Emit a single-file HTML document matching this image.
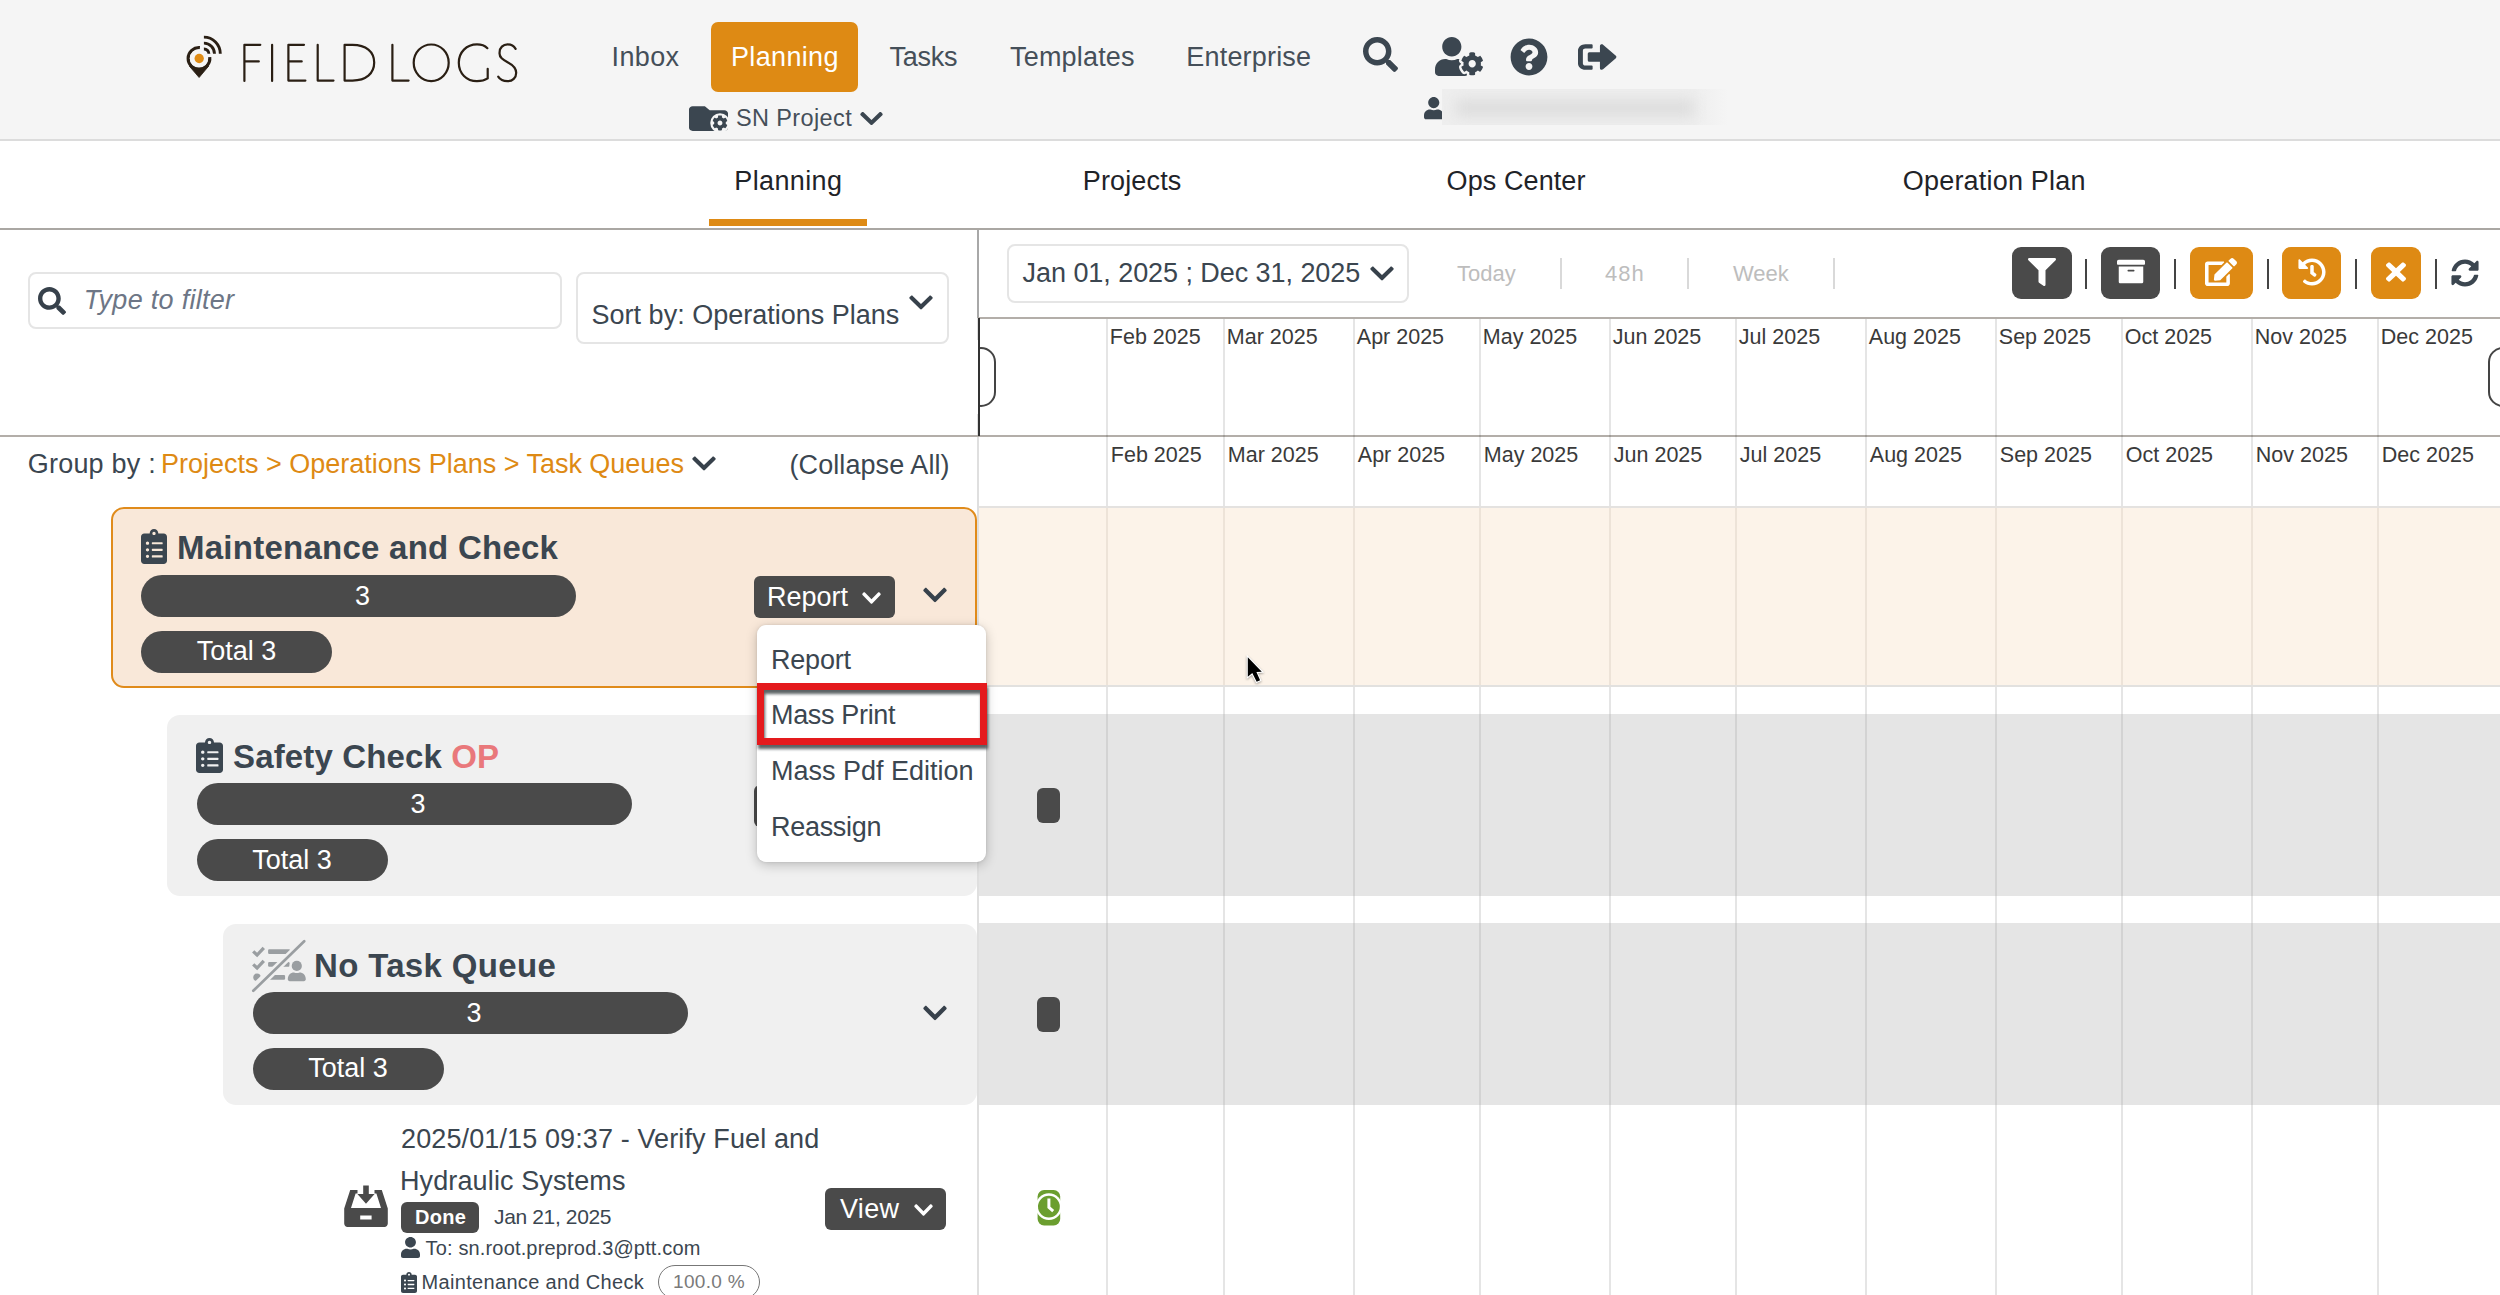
<!DOCTYPE html>
<html lang="en"><head><meta charset="utf-8"><title>FieldLogs - Planning</title>
<style>
html,body{margin:0;padding:0;background:#fff;}
html{overflow:hidden;width:2500px;height:1295px;}
body{width:2500px;height:1295px;position:relative;overflow:hidden;font-family:"Liberation Sans",sans-serif;}
.b{position:absolute;box-sizing:border-box;}
.ic{position:absolute;display:block;overflow:visible;}
.t{position:absolute;white-space:nowrap;line-height:1;display:block;}
</style></head>
<body>
<div class="b" style="left:0px;top:0px;width:2500px;height:140px;background:#f5f5f5;border-radius:0px;"></div>
<div class="b" style="left:0px;top:139px;width:2500px;height:2px;background:#dcdcdc;border-radius:0px;"></div>
<svg class="ic" style="left:170px;top:20px;width:370px;height:80px" viewBox="170 20 370 80">
<g fill="none" stroke="#2a1f14" stroke-width="2.2" stroke-linecap="round" stroke-linejoin="round">
<path d="M244.4 81 V44.8 H260.3 M244.4 61.4 H258.8"/>
<path d="M272.1 44.8 V81"/>
<path d="M304 44.8 H288.4 V80.6 H305.4 M288.4 61.4 H301.7"/>
<path d="M317.7 44.8 V80.6 H333.5"/>
<path d="M344.6 44.8 V80.6 H352.5 C366 80.6 374.2 73.5 374.2 62.6 C374.2 51.6 366 44.8 352.5 44.8 Z"/>
<path d="M392.4 44.8 V80.6 H408.6"/>
<ellipse cx="431.2" cy="62.8" rx="17.5" ry="18.3"/>
<path d="M487.4 48.2 C484.8 45.6 481 44.4 477 44.4 C466.5 44.4 458.8 52.2 458.8 62.8 C458.8 73.4 466.5 81.2 477 81.2 C481.2 81.2 485 80.2 487.7 78.4 V68.8"/>
<path d="M515.6 48.8 C513.8 45.9 511 44.4 507.6 44.4 C503 44.4 499.6 47.7 499.6 52.3 C498.9 57.4 503 59.9 508 62.4 C513 65 516.2 67.8 516.2 72.8 C516.2 77.8 512.6 81.2 507.4 81.2 C503.3 81.2 500 79.5 498.2 76.6"/>
</g>
<g>
<path fill="#2a1f14" stroke="#2a1f14" stroke-width="0.8" stroke-linejoin="round" d="M189.440 66.220 L199.100 77.500 L208.560 66.220 Z"/>
<path fill="none" stroke="#2a1f14" stroke-width="3.200" d="M209.700 57.100 A10.800 10.800 0 1 1 199.900 47.630"/>
<circle cx="199" cy="58.400" r="9.200" fill="#f5f5f5"/>
<circle cx="199.200" cy="58.500" r="4.650" fill="#e08c15"/>
<g fill="none" stroke="#2a1f14" stroke-width="2.900" stroke-linecap="butt">
<path d="M203.900 37.150 A16.400 16.700 0 0 1 220.300 53.850"/>
<path d="M203.900 43.150 A10.500 10.700 0 0 1 214.500 53.850"/>
<path d="M203.900 48.950 A4.900 4.900 0 0 1 208.900 53.850"/>
</g></g></svg>
<span class="t" style="top:44.1px;font-size:27px;color:#454f59;letter-spacing:0.35px;left:611.6px;">Inbox</span>
<div class="b" style="left:711px;top:22.4px;width:147px;height:69.6px;background:#de8a14;border-radius:7px;"></div>
<span class="t" style="top:44.1px;font-size:27px;color:#fff;letter-spacing:0.34px;left:731px;">Planning</span>
<span class="t" style="top:44.1px;font-size:27px;color:#454f59;letter-spacing:-0.25px;left:889.6px;">Tasks</span>
<span class="t" style="top:44.1px;font-size:27px;color:#454f59;letter-spacing:0.19px;left:1010px;">Templates</span>
<span class="t" style="top:44.1px;font-size:27px;color:#454f59;letter-spacing:0.19px;left:1186.3px;">Enterprise</span>
<svg class="ic" style="left:1363px;top:37px;width:35px;height:35px" viewBox="0 0 512 512" preserveAspectRatio="none" ><path fill="#3b4650" d="M505 442.7L405.3 343c-4.5-4.5-10.6-7-17-7H372c27.6-35.3 44-79.7 44-128C416 93.1 322.9 0 208 0S0 93.1 0 208s93.1 208 208 208c48.3 0 92.7-16.400 128-44v16.300c0 6.400 2.500 12.500 7 17l99.700 99.700c9.400 9.400 24.600 9.400 33.900 0l28.300-28.300c9.400-9.400 9.400-24.600.1-34zM208 336c-70.700 0-128-57.200-128-128 0-70.700 57.200-128 128-128 70.700 0 128 57.200 128 128 0 70.700-57.200 128-128 128z"/></svg>
<svg class="ic" style="left:1435px;top:37px;width:48px;height:39px" viewBox="0 0 640 512" preserveAspectRatio="none" ><path fill="#3b4650" d="M610.500 373.300c2.600-14.100 2.600-28.500 0-42.600l25.800-14.900c3-1.700 4.300-5.200 3.300-8.500-6.700-21.600-18.200-41.200-33.200-57.400-2.300-2.500-6-3.100-9-1.400l-25.800 14.900c-10.900-9.300-23.400-16.500-36.900-21.300v-29.800c0-3.400-2.400-6.400-5.700-7.100-22.300-5-45-4.800-66.200 0-3.300.7-5.700 3.700-5.700 7.100v29.800c-13.500 4.800-26 12-36.900 21.300l-25.800-14.900c-2.900-1.700-6.700-1.100-9 1.400-15 16.200-26.500 35.800-33.200 57.400-1 3.300.4 6.800 3.300 8.500l25.800 14.900c-2.600 14.100-2.600 28.500 0 42.600l-25.800 14.900c-3 1.700-4.300 5.200-3.300 8.500 6.700 21.600 18.200 41.100 33.200 57.400 2.300 2.500 6 3.100 9 1.400l25.800-14.900c10.900 9.300 23.400 16.500 36.900 21.300v29.800c0 3.400 2.400 6.400 5.700 7.100 22.300 5 45 4.800 66.200 0 3.300-.7 5.700-3.700 5.700-7.100v-29.800c13.500-4.800 26-12 36.900-21.300l25.800 14.900c2.900 1.700 6.700 1.100 9-1.400 15-16.200 26.500-35.800 33.200-57.400 1-3.300-.4-6.800-3.300-8.500l-25.800-14.900zM496 400.500c-26.800 0-48.500-21.800-48.500-48.500s21.800-48.500 48.500-48.500 48.500 21.800 48.500 48.500-21.700 48.500-48.500 48.500zM224 256c70.700 0 128-57.300 128-128S294.700 0 224 0 96 57.300 96 128s57.300 128 128 128zm201.200 226.500c-2.300-1.200-4.600-2.600-6.800-3.900l-7.900 4.600c-6 3.400-12.800 5.300-19.600 5.300-10.900 0-21.400-4.600-28.900-12.600-18.300-19.800-32.300-43.900-40.200-69.600-5.500-17.700 1.900-36.400 17.900-45.700l7.900-4.600c-.1-2.600-.1-5.200 0-7.800l-7.900-4.600c-16-9.200-23.400-28-17.900-45.700.9-2.900 2.200-5.800 3.200-8.700-3.800-.3-7.500-1.200-11.400-1.200h-16.700c-22.200 10.200-46.900 16-72.900 16s-50.600-5.800-72.900-16h-16.700C60.200 288 0 348.200 0 422.400V464c0 26.500 21.500 48 48 48h352c10.100 0 19.500-3.200 27.200-8.500-1.200-3.800-2-7.700-2-11.800v-9.200z"/></svg>
<svg class="ic" style="left:1510px;top:38px;width:38px;height:38px" viewBox="0 0 512 512" preserveAspectRatio="none" ><path fill="#3b4650" d="M504 256c0 136.997-111.043 248-248 248S8 392.997 8 256C8 119.083 119.043 8 256 8s248 111.083 248 248zM262.655 90c-54.497 0-89.255 22.957-116.549 63.758-3.536 5.286-2.353 12.415 2.715 16.258l34.699 26.310c5.205 3.947 12.621 3.008 16.665-2.122 17.864-22.658 30.113-35.797 57.303-35.797 20.429 0 45.698 13.148 45.698 32.958 0 14.976-12.363 22.667-32.534 33.976C247.128 238.528 216 254.941 216 296v4c0 6.627 5.373 12 12 12h56c6.627 0 12-5.373 12-12v-1.333c0-28.462 83.186-29.647 83.186-106.667 0-58.002-60.165-102-116.531-102zM256 338c-25.365 0-46 20.635-46 46 0 25.364 20.635 46 46 46s46-20.636 46-46c0-25.365-20.635-46-46-46z"/></svg>
<svg class="ic" style="left:1578px;top:40px;width:39px;height:34px" viewBox="0 0 512 512" preserveAspectRatio="none" ><path fill="#3b4650" d="M497 273L329 441c-15 15-41 4.500-41-17v-96H152c-13.300 0-24-10.700-24-24v-96c0-13.300 10.700-24 24-24h136V88c0-21.400 25.900-32 41-17l168 168c9.300 9.400 9.300 24.600 0 34zM192 436v-40c0-6.600-5.400-12-12-12H96c-17.700 0-32-14.300-32-32V160c0-17.700 14.300-32 32-32h84c6.600 0 12-5.400 12-12V76c0-6.600-5.400-12-12-12H96c-53 0-96 43-96 96v192c0 53 43 96 96 96h84c6.600 0 12-5.400 12-12z"/></svg>
<svg class="ic" style="left:689px;top:102px;width:39px;height:33px" viewBox="0 0 512 512" preserveAspectRatio="none" ><path fill="#3b4650" d="M464 128H272l-64-64H48C21.490 64 0 85.490 0 112v288c0 26.510 21.490 48 48 48h416c26.510 0 48-21.490 48-48V176c0-26.510-21.490-48-48-48z"/></svg>
<svg class="ic" style="left:710px;top:113px;width:20px;height:20px" viewBox="0 0 512 512"><circle cx="256" cy="256" r="250" fill="#f5f5f5"/><path transform="translate(56 56) scale(.78)" fill="#3b4650" d="M487.400 315.700l-42.600-24.600c4.300-23.200 4.300-47 0-70.200l42.600-24.600c4.900-2.800 7.100-8.600 5.500-14-11.100-35.600-30-67.800-54.700-94.600-3.800-4.100-10-5.100-14.800-2.300L380.800 110c-17.900-15.400-38.500-27.300-60.800-35.100V25.800c0-5.600-3.900-10.500-9.400-11.700-36.700-8.200-74.300-7.800-109.200 0-5.500 1.200-9.400 6.100-9.400 11.700V75c-22.200 7.900-42.800 19.800-60.800 35.100L88.700 85.500c-4.900-2.800-11-1.900-14.800 2.300-24.700 26.700-43.600 58.900-54.700 94.600-1.700 5.400.6 11.200 5.500 14L67.300 221c-4.300 23.200-4.300 47 0 70.200l-42.600 24.600c-4.900 2.800-7.100 8.600-5.500 14 11.100 35.600 30 67.800 54.700 94.600 3.800 4.100 10 5.100 14.800 2.300l42.600-24.600c17.900 15.400 38.500 27.300 60.800 35.100v49.200c0 5.600 3.900 10.500 9.400 11.700 36.700 8.200 74.300 7.800 109.200 0 5.500-1.200 9.400-6.100 9.400-11.700v-49.200c22.200-7.900 42.800-19.800 60.800-35.100l42.600 24.600c4.900 2.800 11 1.900 14.800-2.300 24.700-26.700 43.600-58.900 54.700-94.600 1.500-5.500-.7-11.300-5.600-14.100zM256 336c-44.100 0-80-35.900-80-80s35.900-80 80-80 80 35.900 80 80-35.900 80-80 80z"/></svg>
<span class="t" style="top:106.5px;font-size:23.5px;color:#454f59;letter-spacing:0.38px;left:736px;">SN Project</span>
<svg class="ic" style="left:860px;top:106px;width:23px;height:25px" viewBox="0 0 448 512" preserveAspectRatio="none" ><path fill="#3b4650" d="M207.029 381.476L12.686 187.132c-9.373-9.373-9.373-24.569 0-33.941l22.667-22.667c9.357-9.357 24.522-9.375 33.901-.04L224 284.505l154.745-154.021c9.379-9.335 24.544-9.317 33.901.04l22.667 22.667c9.373 9.373 9.373 24.569 0 33.941L240.971 381.476c-9.373 9.372-24.569 9.372-33.942 0z"/></svg>
<svg class="ic" style="left:1424px;top:97px;width:19.5px;height:22.3px" viewBox="0 0 448 512" preserveAspectRatio="none" ><path fill="#3b4650" d="M224 256c70.700 0 128-57.300 128-128S294.700 0 224 0 96 57.300 96 128s57.300 128 128 128zm89.600 32h-16.700c-22.200 10.200-46.900 16-72.900 16s-50.600-5.800-72.900-16h-16.700C60.200 288 0 348.200 0 422.400V464c0 26.500 21.500 48 48 48h352c26.500 0 48-21.500 48-48v-41.600c0-74.200-60.200-134.400-134.400-134.400z"/></svg>
<div class="b" style="left:1441.5px;top:89px;width:292px;height:36px;overflow:hidden;background:linear-gradient(90deg,#eeeeee 0%,#eeeeee 86%,#f2f2f2 93%,#f5f5f5 98%)"><div style="position:absolute;left:14px;right:40px;top:11px;bottom:9px;background:#dcdcdc;filter:blur(7px)"></div></div>
<span class="t" style="top:167.5px;font-size:27px;color:#1f2328;letter-spacing:0.36px;left:734.3px;">Planning</span>
<span class="t" style="top:167.5px;font-size:27px;color:#1f2328;letter-spacing:0.14px;left:1082.8px;">Projects</span>
<span class="t" style="top:167.5px;font-size:27px;color:#1f2328;letter-spacing:0.09px;left:1446.6px;">Ops Center</span>
<span class="t" style="top:167.5px;font-size:27px;color:#1f2328;letter-spacing:0.20px;left:1902.8px;">Operation Plan</span>
<div class="b" style="left:709px;top:219px;width:158px;height:7px;background:#de8a14;border-radius:0px;"></div>
<div class="b" style="left:0px;top:228px;width:2500px;height:2px;background:#aaa7a3;border-radius:0px;"></div>
<div class="b" style="left:976.6px;top:230px;width:2px;height:1065px;background:#dfdfdf;border-radius:0px;"></div>
<div class="b" style="left:977px;top:230px;width:2px;height:88px;background:#a8a8a8;border-radius:0px;"></div>
<div class="b" style="left:28px;top:271.6px;width:534px;height:57px;background:#fff;border-radius:8px;border:2px solid #e5e5e5;"></div>
<svg class="ic" style="left:38px;top:286.5px;width:28px;height:28px" viewBox="0 0 512 512" preserveAspectRatio="none" ><path fill="#37414b" d="M505 442.7L405.3 343c-4.5-4.5-10.6-7-17-7H372c27.6-35.3 44-79.7 44-128C416 93.1 322.9 0 208 0S0 93.1 0 208s93.1 208 208 208c48.3 0 92.7-16.400 128-44v16.300c0 6.400 2.500 12.500 7 17l99.700 99.700c9.400 9.400 24.600 9.400 33.900 0l28.300-28.300c9.400-9.400 9.400-24.600.1-34zM208 336c-70.700 0-128-57.200-128-128 0-70.700 57.200-128 128-128 70.700 0 128 57.200 128 128 0 70.700-57.200 128-128 128z"/></svg>
<span class="t" style="top:287.3px;font-size:27px;color:#6d7686;font-style:italic;letter-spacing:0.29px;left:83.8px;">Type to filter</span>
<div class="b" style="left:576px;top:271.6px;width:373px;height:72.6px;background:#fff;border-radius:8px;border:2px solid #e5e5e5;"></div>
<span class="t" style="top:301.5px;font-size:27px;color:#3b4650;left:591.6px;">Sort by: Operations Plans</span>
<svg class="ic" style="left:909px;top:289px;width:24px;height:27px" viewBox="0 0 448 512" preserveAspectRatio="none" ><path fill="#37414b" d="M207.029 381.476L12.686 187.132c-9.373-9.373-9.373-24.569 0-33.941l22.667-22.667c9.357-9.357 24.522-9.375 33.901-.04L224 284.505l154.745-154.021c9.379-9.335 24.544-9.317 33.901.04l22.667 22.667c9.373 9.373 9.373 24.569 0 33.941L240.971 381.476c-9.373 9.372-24.569 9.372-33.942 0z"/></svg>
<div class="b" style="left:0px;top:435px;width:2500px;height:2px;background:#b3aea9;border-radius:0px;"></div>
<span class="t" style="top:451.1px;font-size:27px;color:#3b4650;letter-spacing:0.20px;left:27.8px;">Group by :</span>
<span class="t" style="top:451.1px;font-size:27px;color:#de8a14;letter-spacing:-0.01px;left:161px;">Projects &gt; Operations Plans &gt; Task Queues</span>
<svg class="ic" style="left:692px;top:450px;width:24px;height:27px" viewBox="0 0 448 512" preserveAspectRatio="none" ><path fill="#37414b" d="M207.029 381.476L12.686 187.132c-9.373-9.373-9.373-24.569 0-33.941l22.667-22.667c9.357-9.357 24.522-9.375 33.901-.04L224 284.505l154.745-154.021c9.379-9.335 24.544-9.317 33.901.04l22.667 22.667c9.373 9.373 9.373 24.569 0 33.941L240.971 381.476c-9.373 9.372-24.569 9.372-33.942 0z"/></svg>
<span class="t" style="top:452.3px;font-size:27px;color:#3b4650;letter-spacing:0.08px;left:789.5px;">(Collapse All)</span>
<div class="b" style="left:1006.5px;top:243.8px;width:402.3px;height:58.8px;background:#fff;border-radius:8px;border:2px solid #e5e5e5;"></div>
<span class="t" style="top:259.8px;font-size:27px;color:#3b4650;letter-spacing:-0.06px;left:1022.6px;">Jan 01, 2025 ; Dec 31, 2025</span>
<svg class="ic" style="left:1370px;top:260px;width:24px;height:27px" viewBox="0 0 448 512" preserveAspectRatio="none" ><path fill="#37414b" d="M207.029 381.476L12.686 187.132c-9.373-9.373-9.373-24.569 0-33.941l22.667-22.667c9.357-9.357 24.522-9.375 33.901-.04L224 284.505l154.745-154.021c9.379-9.335 24.544-9.317 33.901.04l22.667 22.667c9.373 9.373 9.373 24.569 0 33.941L240.971 381.476c-9.373 9.372-24.569 9.372-33.942 0z"/></svg>
<span class="t" style="top:263.0px;font-size:22px;color:#bdbdbd;left:1457px;">Today</span>
<div class="b" style="left:1560px;top:258px;width:2px;height:31px;background:#d9d9d9;border-radius:0px;"></div>
<span class="t" style="top:263.0px;font-size:22px;color:#bdbdbd;letter-spacing:1.00px;left:1605px;">48h</span>
<div class="b" style="left:1687px;top:258px;width:2px;height:31px;background:#d9d9d9;border-radius:0px;"></div>
<span class="t" style="top:263.0px;font-size:22px;color:#bdbdbd;left:1733px;">Week</span>
<div class="b" style="left:1833px;top:258px;width:2px;height:31px;background:#d9d9d9;border-radius:0px;"></div>
<div class="b" style="left:2012px;top:247px;width:60px;height:52px;background:#4a4a4a;border-radius:9px;"></div>
<svg class="ic" style="left:2028px;top:258px;width:28px;height:28px" viewBox="0 0 512 512" preserveAspectRatio="none" ><path fill="#fff" d="M487.976 0H24.028C2.710 0-8.047 25.866 7.058 40.971L192 225.941V432c0 7.831 3.821 15.170 10.237 19.662l80 55.980C298.020 518.690 320 507.493 320 487.980V225.941l184.947-184.970C520.021 25.896 509.338 0 487.976 0z"/></svg>
<div class="b" style="left:2085px;top:259px;width:2px;height:30px;background:#444;border-radius:0px;"></div>
<div class="b" style="left:2101px;top:247px;width:59px;height:52px;background:#4a4a4a;border-radius:9px;"></div>
<svg class="ic" style="left:2117px;top:258px;width:28px;height:27px" viewBox="0 0 512 512" preserveAspectRatio="none" ><path fill="#fff" d="M32 448c0 17.700 14.300 32 32 32h384c17.700 0 32-14.300 32-32V160H32v288zm160-212c0-6.600 5.400-12 12-12h104c6.600 0 12 5.400 12 12v8c0 6.600-5.400 12-12 12H204c-6.600 0-12-5.400-12-12v-8zM480 32H32C14.300 32 0 46.300 0 64v48c0 8.800 7.200 16 16 16h480c8.800 0 16-7.200 16-16V64c0-17.700-14.300-32-32-32z"/></svg>
<div class="b" style="left:2174px;top:259px;width:2px;height:30px;background:#444;border-radius:0px;"></div>
<div class="b" style="left:2190px;top:247px;width:63px;height:52px;background:#de8a14;border-radius:9px;"></div>
<svg class="ic" style="left:2205px;top:258px;width:32px;height:28px" viewBox="0 0 576 512" preserveAspectRatio="none" ><path fill="#fff" d="M402.600 83.200l90.200 90.200c3.800 3.800 3.800 10 0 13.800L274.400 405.600l-92.800 10.300c-12.400 1.400-22.900-9.100-21.500-21.500l10.300-92.800L388.800 83.200c3.800-3.800 10-3.800 13.800 0zm162-22.900l-48.800-48.800c-15.200-15.200-39.900-15.200-55.200 0l-35.400 35.400c-3.800 3.800-3.800 10 0 13.800l90.200 90.200c3.800 3.800 10 3.800 13.800 0l35.400-35.400c15.200-15.300 15.200-40 0-55.200zM384 346.200V448H64V128h229.800c3.200 0 6.200-1.300 8.500-3.500l40-40c7.600-7.600 2.200-20.500-8.500-20.500H48C21.500 64 0 85.500 0 112v352c0 26.500 21.500 48 48 48h352c26.500 0 48-21.500 48-48V306.200c0-10.700-12.900-16-20.500-8.500l-40 40c-2.200 2.300-3.500 5.300-3.500 8.500z"/></svg>
<div class="b" style="left:2267px;top:259px;width:2px;height:30px;background:#444;border-radius:0px;"></div>
<div class="b" style="left:2282px;top:247px;width:59px;height:52px;background:#de8a14;border-radius:9px;"></div>
<svg class="ic" style="left:2298px;top:258px;width:28px;height:28px" viewBox="0 0 512 512" preserveAspectRatio="none" ><path fill="#fff" d="M504 255.531c.253 136.640-111.180 248.372-247.820 248.468-59.015.042-113.223-20.530-155.822-54.911-11.077-8.940-11.905-25.541-1.839-35.607l11.267-11.267c8.609-8.609 22.353-9.551 31.891-1.984C173.062 425.135 212.781 440 256 440c101.705 0 184-82.311 184-184 0-101.705-82.311-184-184-184-48.814 0-93.149 18.969-126.068 49.932l50.754 50.754c10.080 10.080 2.941 27.314-11.313 27.314H24c-8.837 0-16-7.163-16-16V38.627c0-14.254 17.234-21.393 27.314-11.314l49.372 49.372C129.209 34.136 189.552 8 256 8c136.810 0 247.747 110.780 248 247.531zm-180.912 78.784l9.823-12.630c8.138-10.463 6.253-25.542-4.210-33.679L288 256.349V152c0-13.255-10.745-24-24-24h-16c-13.255 0-24 10.745-24 24v135.651l65.409 50.874c10.463 8.137 25.541 6.253 33.679-4.210z"/></svg>
<div class="b" style="left:2355px;top:259px;width:2px;height:30px;background:#444;border-radius:0px;"></div>
<div class="b" style="left:2371px;top:247px;width:50px;height:52px;background:#de8a14;border-radius:9px;"></div>
<svg class="ic" style="left:2386px;top:258px;width:20px;height:28px" viewBox="0 0 352 512" preserveAspectRatio="none" ><path fill="#fff" d="M242.72 256l100.070-100.070c12.280-12.280 12.280-32.190 0-44.480l-22.240-22.240c-12.280-12.280-32.190-12.280-44.480 0L176 189.280 75.930 89.210c-12.280-12.280-32.190-12.280-44.480 0L9.210 111.450c-12.280 12.280-12.280 32.190 0 44.480L109.280 256 9.210 356.070c-12.280 12.280-12.280 32.190 0 44.480l22.240 22.240c12.280 12.280 32.200 12.280 44.480 0L176 322.720l100.070 100.070c12.280 12.280 32.200 12.280 44.480 0l22.240-22.240c12.280-12.280 12.280-32.190 0-44.480L242.720 256z"/></svg>
<div class="b" style="left:2435px;top:259px;width:2px;height:30px;background:#444;border-radius:0px;"></div>
<svg class="ic" style="left:2451px;top:259px;width:28px;height:28px" viewBox="0 0 512 512" preserveAspectRatio="none" ><path fill="#3b4650" d="M370.720 133.280C339.458 104.008 298.888 87.962 255.848 88c-77.458.068-144.328 53.178-162.791 126.850-1.344 5.363-6.122 9.150-11.651 9.150H24.103c-7.498 0-13.194-6.807-11.807-14.176C33.933 94.924 134.813 8 256 8c66.448 0 126.791 26.136 171.315 68.685L463.030 40.970C478.149 25.851 504 36.559 504 57.941V192c0 13.255-10.745 24-24 24H345.941c-21.382 0-32.090-25.851-16.971-40.971l41.750-41.749zM32 296h134.059c21.382 0 32.090 25.851 16.971 40.971l-41.750 41.750c31.262 29.273 71.835 45.319 114.876 45.280 77.418-.07 144.315-53.144 162.787-126.849 1.344-5.363 6.122-9.150 11.651-9.150h57.304c7.498 0 13.194 6.807 11.807 14.176C478.067 417.076 377.187 504 256 504c-66.448 0-126.791-26.136-171.315-68.685L48.970 471.030C33.851 486.149 8 475.441 8 454.059V320c0-13.255 10.745-24 24-24z"/></svg>
<div class="b" style="left:978px;top:317px;width:1522px;height:2px;background:#b3aea9;border-radius:0px;"></div>
<div class="b" style="left:1106.4px;top:319px;width:2px;height:976px;background:rgba(0,0,0,0.10);border-radius:0px;"></div>
<div class="b" style="left:1223.4px;top:319px;width:2px;height:976px;background:rgba(0,0,0,0.10);border-radius:0px;"></div>
<div class="b" style="left:1353.4px;top:319px;width:2px;height:976px;background:rgba(0,0,0,0.10);border-radius:0px;"></div>
<div class="b" style="left:1479.4px;top:319px;width:2px;height:976px;background:rgba(0,0,0,0.10);border-radius:0px;"></div>
<div class="b" style="left:1609.4px;top:319px;width:2px;height:976px;background:rgba(0,0,0,0.10);border-radius:0px;"></div>
<div class="b" style="left:1735.4px;top:319px;width:2px;height:976px;background:rgba(0,0,0,0.10);border-radius:0px;"></div>
<div class="b" style="left:1865.4px;top:319px;width:2px;height:976px;background:rgba(0,0,0,0.10);border-radius:0px;"></div>
<div class="b" style="left:1995.4px;top:319px;width:2px;height:976px;background:rgba(0,0,0,0.10);border-radius:0px;"></div>
<div class="b" style="left:2121.4px;top:319px;width:2px;height:976px;background:rgba(0,0,0,0.10);border-radius:0px;"></div>
<div class="b" style="left:2251.4px;top:319px;width:2px;height:976px;background:rgba(0,0,0,0.10);border-radius:0px;"></div>
<div class="b" style="left:2377.4px;top:319px;width:2px;height:976px;background:rgba(0,0,0,0.10);border-radius:0px;"></div>
<div class="b" style="left:979px;top:505.6px;width:1521px;height:181.6px;background:#fcf3e9;border-radius:0px;border-top:2px solid #e4e2e0;border-bottom:2px solid #e2e1df;"></div>
<div class="b" style="left:979px;top:714px;width:1521px;height:182px;background:#e5e5e5;border-radius:0px;"></div>
<div class="b" style="left:979px;top:923px;width:1521px;height:182px;background:#e5e5e5;border-radius:0px;"></div>
<div class="b" style="left:1106.4px;top:507.6px;width:2px;height:177.6px;background:rgba(60,40,20,0.075);border-radius:0px;"></div>
<div class="b" style="left:1106.4px;top:714px;width:2px;height:182px;background:rgba(0,0,0,0.08);border-radius:0px;"></div>
<div class="b" style="left:1106.4px;top:923px;width:2px;height:182px;background:rgba(0,0,0,0.08);border-radius:0px;"></div>
<div class="b" style="left:1223.4px;top:507.6px;width:2px;height:177.6px;background:rgba(60,40,20,0.075);border-radius:0px;"></div>
<div class="b" style="left:1223.4px;top:714px;width:2px;height:182px;background:rgba(0,0,0,0.08);border-radius:0px;"></div>
<div class="b" style="left:1223.4px;top:923px;width:2px;height:182px;background:rgba(0,0,0,0.08);border-radius:0px;"></div>
<div class="b" style="left:1353.4px;top:507.6px;width:2px;height:177.6px;background:rgba(60,40,20,0.075);border-radius:0px;"></div>
<div class="b" style="left:1353.4px;top:714px;width:2px;height:182px;background:rgba(0,0,0,0.08);border-radius:0px;"></div>
<div class="b" style="left:1353.4px;top:923px;width:2px;height:182px;background:rgba(0,0,0,0.08);border-radius:0px;"></div>
<div class="b" style="left:1479.4px;top:507.6px;width:2px;height:177.6px;background:rgba(60,40,20,0.075);border-radius:0px;"></div>
<div class="b" style="left:1479.4px;top:714px;width:2px;height:182px;background:rgba(0,0,0,0.08);border-radius:0px;"></div>
<div class="b" style="left:1479.4px;top:923px;width:2px;height:182px;background:rgba(0,0,0,0.08);border-radius:0px;"></div>
<div class="b" style="left:1609.4px;top:507.6px;width:2px;height:177.6px;background:rgba(60,40,20,0.075);border-radius:0px;"></div>
<div class="b" style="left:1609.4px;top:714px;width:2px;height:182px;background:rgba(0,0,0,0.08);border-radius:0px;"></div>
<div class="b" style="left:1609.4px;top:923px;width:2px;height:182px;background:rgba(0,0,0,0.08);border-radius:0px;"></div>
<div class="b" style="left:1735.4px;top:507.6px;width:2px;height:177.6px;background:rgba(60,40,20,0.075);border-radius:0px;"></div>
<div class="b" style="left:1735.4px;top:714px;width:2px;height:182px;background:rgba(0,0,0,0.08);border-radius:0px;"></div>
<div class="b" style="left:1735.4px;top:923px;width:2px;height:182px;background:rgba(0,0,0,0.08);border-radius:0px;"></div>
<div class="b" style="left:1865.4px;top:507.6px;width:2px;height:177.6px;background:rgba(60,40,20,0.075);border-radius:0px;"></div>
<div class="b" style="left:1865.4px;top:714px;width:2px;height:182px;background:rgba(0,0,0,0.08);border-radius:0px;"></div>
<div class="b" style="left:1865.4px;top:923px;width:2px;height:182px;background:rgba(0,0,0,0.08);border-radius:0px;"></div>
<div class="b" style="left:1995.4px;top:507.6px;width:2px;height:177.6px;background:rgba(60,40,20,0.075);border-radius:0px;"></div>
<div class="b" style="left:1995.4px;top:714px;width:2px;height:182px;background:rgba(0,0,0,0.08);border-radius:0px;"></div>
<div class="b" style="left:1995.4px;top:923px;width:2px;height:182px;background:rgba(0,0,0,0.08);border-radius:0px;"></div>
<div class="b" style="left:2121.4px;top:507.6px;width:2px;height:177.6px;background:rgba(60,40,20,0.075);border-radius:0px;"></div>
<div class="b" style="left:2121.4px;top:714px;width:2px;height:182px;background:rgba(0,0,0,0.08);border-radius:0px;"></div>
<div class="b" style="left:2121.4px;top:923px;width:2px;height:182px;background:rgba(0,0,0,0.08);border-radius:0px;"></div>
<div class="b" style="left:2251.4px;top:507.6px;width:2px;height:177.6px;background:rgba(60,40,20,0.075);border-radius:0px;"></div>
<div class="b" style="left:2251.4px;top:714px;width:2px;height:182px;background:rgba(0,0,0,0.08);border-radius:0px;"></div>
<div class="b" style="left:2251.4px;top:923px;width:2px;height:182px;background:rgba(0,0,0,0.08);border-radius:0px;"></div>
<div class="b" style="left:2377.4px;top:507.6px;width:2px;height:177.6px;background:rgba(60,40,20,0.075);border-radius:0px;"></div>
<div class="b" style="left:2377.4px;top:714px;width:2px;height:182px;background:rgba(0,0,0,0.08);border-radius:0px;"></div>
<div class="b" style="left:2377.4px;top:923px;width:2px;height:182px;background:rgba(0,0,0,0.08);border-radius:0px;"></div>
<div class="b" style="left:978px;top:318px;width:2px;height:118px;background:#333;border-radius:0px;"></div>
<div class="b" style="left:966px;top:347px;width:29.5px;height:60px;background:#fff;border-radius:15px;border:2px solid #444;"></div>
<div class="b" style="left:960px;top:340px;width:18px;height:74px;background:#fff;border-radius:0px;"></div>
<div class="b" style="left:978px;top:318px;width:2px;height:118px;background:#333;border-radius:0px;"></div>
<div class="b" style="left:2480px;top:340px;width:20px;height:80px;overflow:hidden"><div class="b" style="left:7.5px;top:7px;width:40px;height:60px;background:#fff;border-radius:15px;border:2px solid #444"></div></div>
<span class="t" style="top:327.1px;font-size:21.5px;color:#3a3a3a;left:1109.8px;">Feb 2025</span>
<span class="t" style="top:445.1px;font-size:21.5px;color:#3a3a3a;left:1110.8px;">Feb 2025</span>
<span class="t" style="top:327.1px;font-size:21.5px;color:#3a3a3a;left:1226.8px;">Mar 2025</span>
<span class="t" style="top:445.1px;font-size:21.5px;color:#3a3a3a;left:1227.8px;">Mar 2025</span>
<span class="t" style="top:327.1px;font-size:21.5px;color:#3a3a3a;left:1356.8px;">Apr 2025</span>
<span class="t" style="top:445.1px;font-size:21.5px;color:#3a3a3a;left:1357.8px;">Apr 2025</span>
<span class="t" style="top:327.1px;font-size:21.5px;color:#3a3a3a;left:1482.8px;">May 2025</span>
<span class="t" style="top:445.1px;font-size:21.5px;color:#3a3a3a;left:1483.8px;">May 2025</span>
<span class="t" style="top:327.1px;font-size:21.5px;color:#3a3a3a;left:1612.8px;">Jun 2025</span>
<span class="t" style="top:445.1px;font-size:21.5px;color:#3a3a3a;left:1613.8px;">Jun 2025</span>
<span class="t" style="top:327.1px;font-size:21.5px;color:#3a3a3a;left:1738.8px;">Jul 2025</span>
<span class="t" style="top:445.1px;font-size:21.5px;color:#3a3a3a;left:1739.8px;">Jul 2025</span>
<span class="t" style="top:327.1px;font-size:21.5px;color:#3a3a3a;left:1868.8px;">Aug 2025</span>
<span class="t" style="top:445.1px;font-size:21.5px;color:#3a3a3a;left:1869.8px;">Aug 2025</span>
<span class="t" style="top:327.1px;font-size:21.5px;color:#3a3a3a;left:1998.8px;">Sep 2025</span>
<span class="t" style="top:445.1px;font-size:21.5px;color:#3a3a3a;left:1999.8px;">Sep 2025</span>
<span class="t" style="top:327.1px;font-size:21.5px;color:#3a3a3a;left:2124.8px;">Oct 2025</span>
<span class="t" style="top:445.1px;font-size:21.5px;color:#3a3a3a;left:2125.8px;">Oct 2025</span>
<span class="t" style="top:327.1px;font-size:21.5px;color:#3a3a3a;left:2254.8px;">Nov 2025</span>
<span class="t" style="top:445.1px;font-size:21.5px;color:#3a3a3a;left:2255.8px;">Nov 2025</span>
<span class="t" style="top:327.1px;font-size:21.5px;color:#3a3a3a;left:2380.8px;">Dec 2025</span>
<span class="t" style="top:445.1px;font-size:21.5px;color:#3a3a3a;left:2381.8px;">Dec 2025</span>
<div class="b" style="left:111.3px;top:506.6px;width:865.7px;height:181px;background:#f9e8d9;border-radius:13px;border:2px solid #e08b1b;"></div>
<svg class="ic" style="left:141px;top:529px;width:26px;height:35px" viewBox="0 0 384 512" preserveAspectRatio="none" ><path fill="#3b4650" d="M336 64h-80c0-35.300-28.700-64-64-64s-64 28.700-64 64H48C21.500 64 0 85.500 0 112v352c0 26.500 21.500 48 48 48h288c26.500 0 48-21.500 48-48V112c0-26.500-21.500-48-48-48zM96 424c-13.300 0-24-10.700-24-24s10.700-24 24-24 24 10.700 24 24-10.700 24-24 24zm0-96c-13.300 0-24-10.700-24-24s10.700-24 24-24 24 10.700 24 24-10.700 24-24 24zm0-96c-13.300 0-24-10.700-24-24s10.700-24 24-24 24 10.700 24 24-10.700 24-24 24zm96-192c13.300 0 24 10.700 24 24s-10.700 24-24 24-24-10.700-24-24 10.700-24 24-24zm128 368c0 4.400-3.600 8-8 8H168c-4.400 0-8-3.600-8-8v-16c0-4.400 3.600-8 8-8h144c4.400 0 8 3.600 8 8v16zm0-96c0 4.400-3.600 8-8 8H168c-4.400 0-8-3.600-8-8v-16c0-4.400 3.600-8 8-8h144c4.400 0 8 3.600 8 8v16zm0-96c0 4.400-3.600 8-8 8H168c-4.400 0-8-3.600-8-8v-16c0-4.400 3.600-8 8-8h144c4.400 0 8 3.600 8 8v16z"/></svg>
<span class="t" style="top:531.3px;font-size:33px;color:#3b4650;font-weight:700;letter-spacing:0.25px;left:177px;">Maintenance and Check</span>
<div class="b" style="left:141px;top:574.5px;width:435px;height:42px;background:#4a4a4a;border-radius:21px;"></div>
<span class="t" style="top:582.5px;font-size:27px;color:#fff;left:-137.5px;width:1000px;text-align:center;">3</span>
<div class="b" style="left:141px;top:630.6px;width:191px;height:42px;background:#4a4a4a;border-radius:21px;"></div>
<span class="t" style="top:638.0px;font-size:27px;color:#fff;left:-263.5px;width:1000px;text-align:center;">Total 3</span>
<div class="b" style="left:754px;top:576px;width:141px;height:42px;background:#4a4a4a;border-radius:6px;"></div>
<span class="t" style="top:584.3px;font-size:27px;color:#fff;left:767px;">Report</span>
<svg class="ic" style="left:862px;top:587px;width:19px;height:22px" viewBox="0 0 448 512" preserveAspectRatio="none" ><path fill="#fff" d="M207.029 381.476L12.686 187.132c-9.373-9.373-9.373-24.569 0-33.941l22.667-22.667c9.357-9.357 24.522-9.375 33.901-.04L224 284.505l154.745-154.021c9.379-9.335 24.544-9.317 33.901.04l22.667 22.667c9.373 9.373 9.373 24.569 0 33.941L240.971 381.476c-9.373 9.372-24.569 9.372-33.942 0z"/></svg>
<svg class="ic" style="left:923px;top:581px;width:24px;height:28px" viewBox="0 0 448 512" preserveAspectRatio="none" ><path fill="#37414b" d="M207.029 381.476L12.686 187.132c-9.373-9.373-9.373-24.569 0-33.941l22.667-22.667c9.357-9.357 24.522-9.375 33.901-.04L224 284.505l154.745-154.021c9.379-9.335 24.544-9.317 33.901.04l22.667 22.667c9.373 9.373 9.373 24.569 0 33.941L240.971 381.476c-9.373 9.372-24.569 9.372-33.942 0z"/></svg>
<div class="b" style="left:167px;top:715px;width:810px;height:181px;background:#f0f0f0;border-radius:13px;"></div>
<svg class="ic" style="left:196px;top:738px;width:27px;height:35px" viewBox="0 0 384 512" preserveAspectRatio="none" ><path fill="#3b4650" d="M336 64h-80c0-35.300-28.700-64-64-64s-64 28.700-64 64H48C21.500 64 0 85.500 0 112v352c0 26.500 21.500 48 48 48h288c26.500 0 48-21.500 48-48V112c0-26.500-21.500-48-48-48zM96 424c-13.300 0-24-10.700-24-24s10.700-24 24-24 24 10.700 24 24-10.700 24-24 24zm0-96c-13.300 0-24-10.700-24-24s10.700-24 24-24 24 10.700 24 24-10.700 24-24 24zm0-96c-13.300 0-24-10.700-24-24s10.700-24 24-24 24 10.700 24 24-10.700 24-24 24zm96-192c13.300 0 24 10.700 24 24s-10.700 24-24 24-24-10.700-24-24 10.700-24 24-24zm128 368c0 4.400-3.600 8-8 8H168c-4.400 0-8-3.600-8-8v-16c0-4.400 3.600-8 8-8h144c4.400 0 8 3.600 8 8v16zm0-96c0 4.400-3.600 8-8 8H168c-4.400 0-8-3.600-8-8v-16c0-4.400 3.600-8 8-8h144c4.400 0 8 3.600 8 8v16zm0-96c0 4.400-3.600 8-8 8H168c-4.400 0-8-3.600-8-8v-16c0-4.400 3.600-8 8-8h144c4.400 0 8 3.600 8 8v16z"/></svg>
<span class="t" style="top:740.3px;font-size:33px;color:#3b4650;font-weight:700;letter-spacing:0.14px;left:233px;">Safety Check <span style="color:#e9787b">OP</span></span>
<div class="b" style="left:196.5px;top:783.0px;width:435px;height:42px;background:#4a4a4a;border-radius:21px;"></div>
<span class="t" style="top:791.0px;font-size:27px;color:#fff;left:-82.0px;width:1000px;text-align:center;">3</span>
<div class="b" style="left:196.5px;top:839.1px;width:191px;height:42px;background:#4a4a4a;border-radius:21px;"></div>
<span class="t" style="top:846.5px;font-size:27px;color:#fff;left:-208.0px;width:1000px;text-align:center;">Total 3</span>
<div class="b" style="left:754px;top:785px;width:141px;height:42px;background:#4a4a4a;border-radius:6px;"></div>
<div class="b" style="left:1037px;top:788px;width:23px;height:35px;background:#4a4a4a;border-radius:6px;"></div>
<div class="b" style="left:223px;top:924px;width:754px;height:181px;background:#f0f0f0;border-radius:13px;"></div>
<svg class="ic" style="left:248px;top:936px;width:62px;height:60px" viewBox="248 936 62 60">
<g fill="none" stroke="#9a9ea1" stroke-width="3.300" stroke-linejoin="miter">
<path d="M253.200 951.400 L257.100 955 L263.800 947.800"/><path d="M253.200 964.400 L257.100 968 L263.800 960.800"/></g>
<g fill="#9a9ea1"><circle cx="257" cy="977.300" r="3.700"/>
<rect x="268.100" y="949.200" width="22" height="4.700" rx="1.200"/><rect x="268.100" y="962" width="21.500" height="4.800" rx="1.200"/><rect x="268.100" y="974.900" width="17" height="4.800" rx="1.200"/></g>
<path d="M268.600 974 L254.200 988" stroke="#f0f0f0" stroke-width="8" fill="none"/>
<circle cx="296.800" cy="965.900" r="7.300" fill="#f0f0f0"/>
<path d="M253.300 990.700 L304.200 941.200" stroke="#f0f0f0" stroke-width="7.600" fill="none"/>
<path d="M253.300 990.700 L304.200 941.200" stroke="#9a9ea1" stroke-width="2.700" stroke-linecap="round" fill="none"/>
<g fill="#9a9ea1"><circle cx="296.800" cy="965.900" r="5.100"/>
<path d="M287.800 979.300 C287.800 975 290.600 972.400 294 972.400 C295 972.900 295.900 973.100 296.800 973.100 C297.700 973.100 298.600 972.900 299.600 972.400 C303 972.400 305.800 975 305.800 979.300 C305.800 980.400 305 981.200 303.900 981.200 H289.700 C288.600 981.200 287.800 980.400 287.800 979.300 Z"/></g>
</svg>
<span class="t" style="top:949.3px;font-size:33px;color:#3b4650;font-weight:700;letter-spacing:0.33px;left:314px;">No Task Queue</span>
<div class="b" style="left:252.5px;top:991.5px;width:435px;height:42px;background:#4a4a4a;border-radius:21px;"></div>
<span class="t" style="top:999.5px;font-size:27px;color:#fff;left:-26.0px;width:1000px;text-align:center;">3</span>
<div class="b" style="left:252.5px;top:1047.6px;width:191px;height:42px;background:#4a4a4a;border-radius:21px;"></div>
<span class="t" style="top:1055.0px;font-size:27px;color:#fff;left:-152.0px;width:1000px;text-align:center;">Total 3</span>
<svg class="ic" style="left:923px;top:999px;width:24px;height:28px" viewBox="0 0 448 512" preserveAspectRatio="none" ><path fill="#37414b" d="M207.029 381.476L12.686 187.132c-9.373-9.373-9.373-24.569 0-33.941l22.667-22.667c9.357-9.357 24.522-9.375 33.901-.04L224 284.505l154.745-154.021c9.379-9.335 24.544-9.317 33.901.04l22.667 22.667c9.373 9.373 9.373 24.569 0 33.941L240.971 381.476c-9.373 9.372-24.569 9.372-33.942 0z"/></svg>
<div class="b" style="left:1037px;top:997px;width:23px;height:35px;background:#4a4a4a;border-radius:6px;"></div>
<span class="t" style="top:1125.5px;font-size:27px;color:#3b4650;letter-spacing:0.12px;left:401px;">2025/01/15 09:37 - Verify Fuel and</span>
<span class="t" style="top:1167.5px;font-size:27px;color:#3b4650;letter-spacing:0.12px;left:400px;">Hydraulic Systems</span>
<svg class="ic" style="left:344px;top:1185px;width:44px;height:42px" viewBox="0 0 44 42">
<path fill="#4a4a4a" d="M19.200 0.600 H24.800 V9 H30.600 L22 18.800 L13.400 9 H19.200 Z"/>
<path fill="#4a4a4a" fill-rule="evenodd" d="M6.200 5 H13.500 V8.600 H11.600 L7 23 H37 L32.400 8.600 H30.500 V5 H37.800 L43.800 23.500 V38.600 C43.800 40.500 42.300 42 40.400 42 H3.600 C1.700 42 0.200 40.500 0.200 38.600 V23.500 Z M16.200 30.400 V34.400 H27.600 V30.400 Z"/>
</svg>
<div class="b" style="left:401px;top:1202px;width:78px;height:31px;background:#4a4a4a;border-radius:6px;"></div>
<span class="t" style="top:1206.5px;font-size:20px;color:#fff;font-weight:700;letter-spacing:0.33px;left:415px;">Done</span>
<span class="t" style="top:1205.5px;font-size:21px;color:#3b4650;letter-spacing:-0.36px;left:494px;">Jan 21, 2025</span>
<svg class="ic" style="left:401px;top:1237px;width:19px;height:21px" viewBox="0 0 448 512" preserveAspectRatio="none" ><path fill="#3b4650" d="M224 256c70.700 0 128-57.300 128-128S294.700 0 224 0 96 57.300 96 128s57.300 128 128 128zm89.600 32h-16.700c-22.200 10.200-46.900 16-72.900 16s-50.600-5.800-72.900-16h-16.700C60.200 288 0 348.200 0 422.400V464c0 26.500 21.500 48 48 48h352c26.500 0 48-21.500 48-48v-41.600c0-74.200-60.200-134.400-134.400-134.400z"/></svg>
<span class="t" style="top:1237.5px;font-size:20px;color:#3b4650;letter-spacing:0.16px;left:425.5px;">To: sn.root.preprod.3@ptt.com</span>
<svg class="ic" style="left:401px;top:1272px;width:16px;height:21px" viewBox="0 0 384 512" preserveAspectRatio="none" ><path fill="#3b4650" d="M336 64h-80c0-35.300-28.700-64-64-64s-64 28.700-64 64H48C21.500 64 0 85.500 0 112v352c0 26.500 21.500 48 48 48h288c26.500 0 48-21.500 48-48V112c0-26.500-21.500-48-48-48zM96 424c-13.300 0-24-10.700-24-24s10.700-24 24-24 24 10.700 24 24-10.700 24-24 24zm0-96c-13.300 0-24-10.700-24-24s10.700-24 24-24 24 10.700 24 24-10.700 24-24 24zm0-96c-13.300 0-24-10.700-24-24s10.700-24 24-24 24 10.700 24 24-10.700 24-24 24zm96-192c13.300 0 24 10.700 24 24s-10.700 24-24 24-24-10.700-24-24 10.700-24 24-24zm128 368c0 4.400-3.600 8-8 8H168c-4.400 0-8-3.600-8-8v-16c0-4.400 3.600-8 8-8h144c4.400 0 8 3.600 8 8v16zm0-96c0 4.400-3.600 8-8 8H168c-4.400 0-8-3.600-8-8v-16c0-4.400 3.600-8 8-8h144c4.400 0 8 3.600 8 8v16zm0-96c0 4.400-3.600 8-8 8H168c-4.400 0-8-3.600-8-8v-16c0-4.400 3.600-8 8-8h144c4.400 0 8 3.600 8 8v16z"/></svg>
<span class="t" style="top:1272.0px;font-size:20px;color:#3b4650;letter-spacing:0.33px;left:421.5px;">Maintenance and Check</span>
<div class="b" style="left:650px;top:1260px;width:120px;height:35px;overflow:hidden"><div class="b" style="left:8px;top:5px;width:102px;height:34px;border-radius:17px;border:1.7px solid #777"></div></div>
<span class="t" style="top:1271.5px;font-size:19px;color:#7a7a7a;letter-spacing:0.33px;left:673px;">100.0 %</span>
<div class="b" style="left:825px;top:1188px;width:121px;height:42px;background:#4a4a4a;border-radius:6px;"></div>
<span class="t" style="top:1195.5px;font-size:27px;color:#fff;letter-spacing:0.33px;left:840px;">View</span>
<svg class="ic" style="left:914px;top:1199px;width:19px;height:22px" viewBox="0 0 448 512" preserveAspectRatio="none" ><path fill="#fff" d="M207.029 381.476L12.686 187.132c-9.373-9.373-9.373-24.569 0-33.941l22.667-22.667c9.357-9.357 24.522-9.375 33.901-.04L224 284.505l154.745-154.021c9.379-9.335 24.544-9.317 33.901.04l22.667 22.667c9.373 9.373 9.373 24.569 0 33.941L240.971 381.476c-9.373 9.372-24.569 9.372-33.942 0z"/></svg>
<svg class="ic" style="left:1034px;top:1188px;width:30px;height:40px" viewBox="1034 1188 30 40">
<rect x="1037.600" y="1190.100" width="22.600" height="35.400" rx="6.500" fill="#6b9e2f"/>
<circle cx="1048.900" cy="1206.600" r="13.300" fill="#fff"/>
<circle cx="1048.900" cy="1206.600" r="10.900" fill="#6b9e2f"/>
<path d="M1048.900 1198.600 V1207.400 L1053.200 1211.100" stroke="#fff" stroke-width="3" fill="none" stroke-linecap="butt" stroke-linejoin="miter"/>
</svg>
<div class="b" style="left:757px;top:625px;width:229px;height:237px;background:#fff;border-radius:9px;box-shadow:0 3px 12px rgba(0,0,0,.22),0 0 3px rgba(0,0,0,.10);"></div>
<span class="t" style="top:646.5px;font-size:27px;color:#3b4650;letter-spacing:-0.20px;left:771px;">Report</span>
<div class="b" style="left:757px;top:682.5px;width:230px;height:62.5px;background:transparent;border-radius:0px;border:7px solid #e41a1d;filter:drop-shadow(1px 4px 1.5px rgba(45,55,58,.78));"></div>
<span class="t" style="top:701.5px;font-size:27px;color:#3b4650;letter-spacing:-0.33px;left:771px;">Mass Print</span>
<span class="t" style="top:757.5px;font-size:27px;color:#3b4650;left:771px;">Mass Pdf Edition</span>
<span class="t" style="top:813.5px;font-size:27px;color:#3b4650;letter-spacing:-0.29px;left:771px;">Reassign</span>
<svg class="ic" style="left:1240px;top:650px;width:30px;height:40px" viewBox="1240 650 30 40">
<path d="M1247.800 657.300 L1247.800 676.700 L1252.300 673.100 L1256.700 681.800 L1260.100 680.300 L1256.400 672.100 L1261.800 671.700 Z" fill="#000" stroke="#fff" stroke-width="2.200" stroke-linejoin="miter" paint-order="stroke" style="filter:drop-shadow(0.500px 1px 1px rgba(0,0,0,.35))"/>
</svg>
</body></html>
